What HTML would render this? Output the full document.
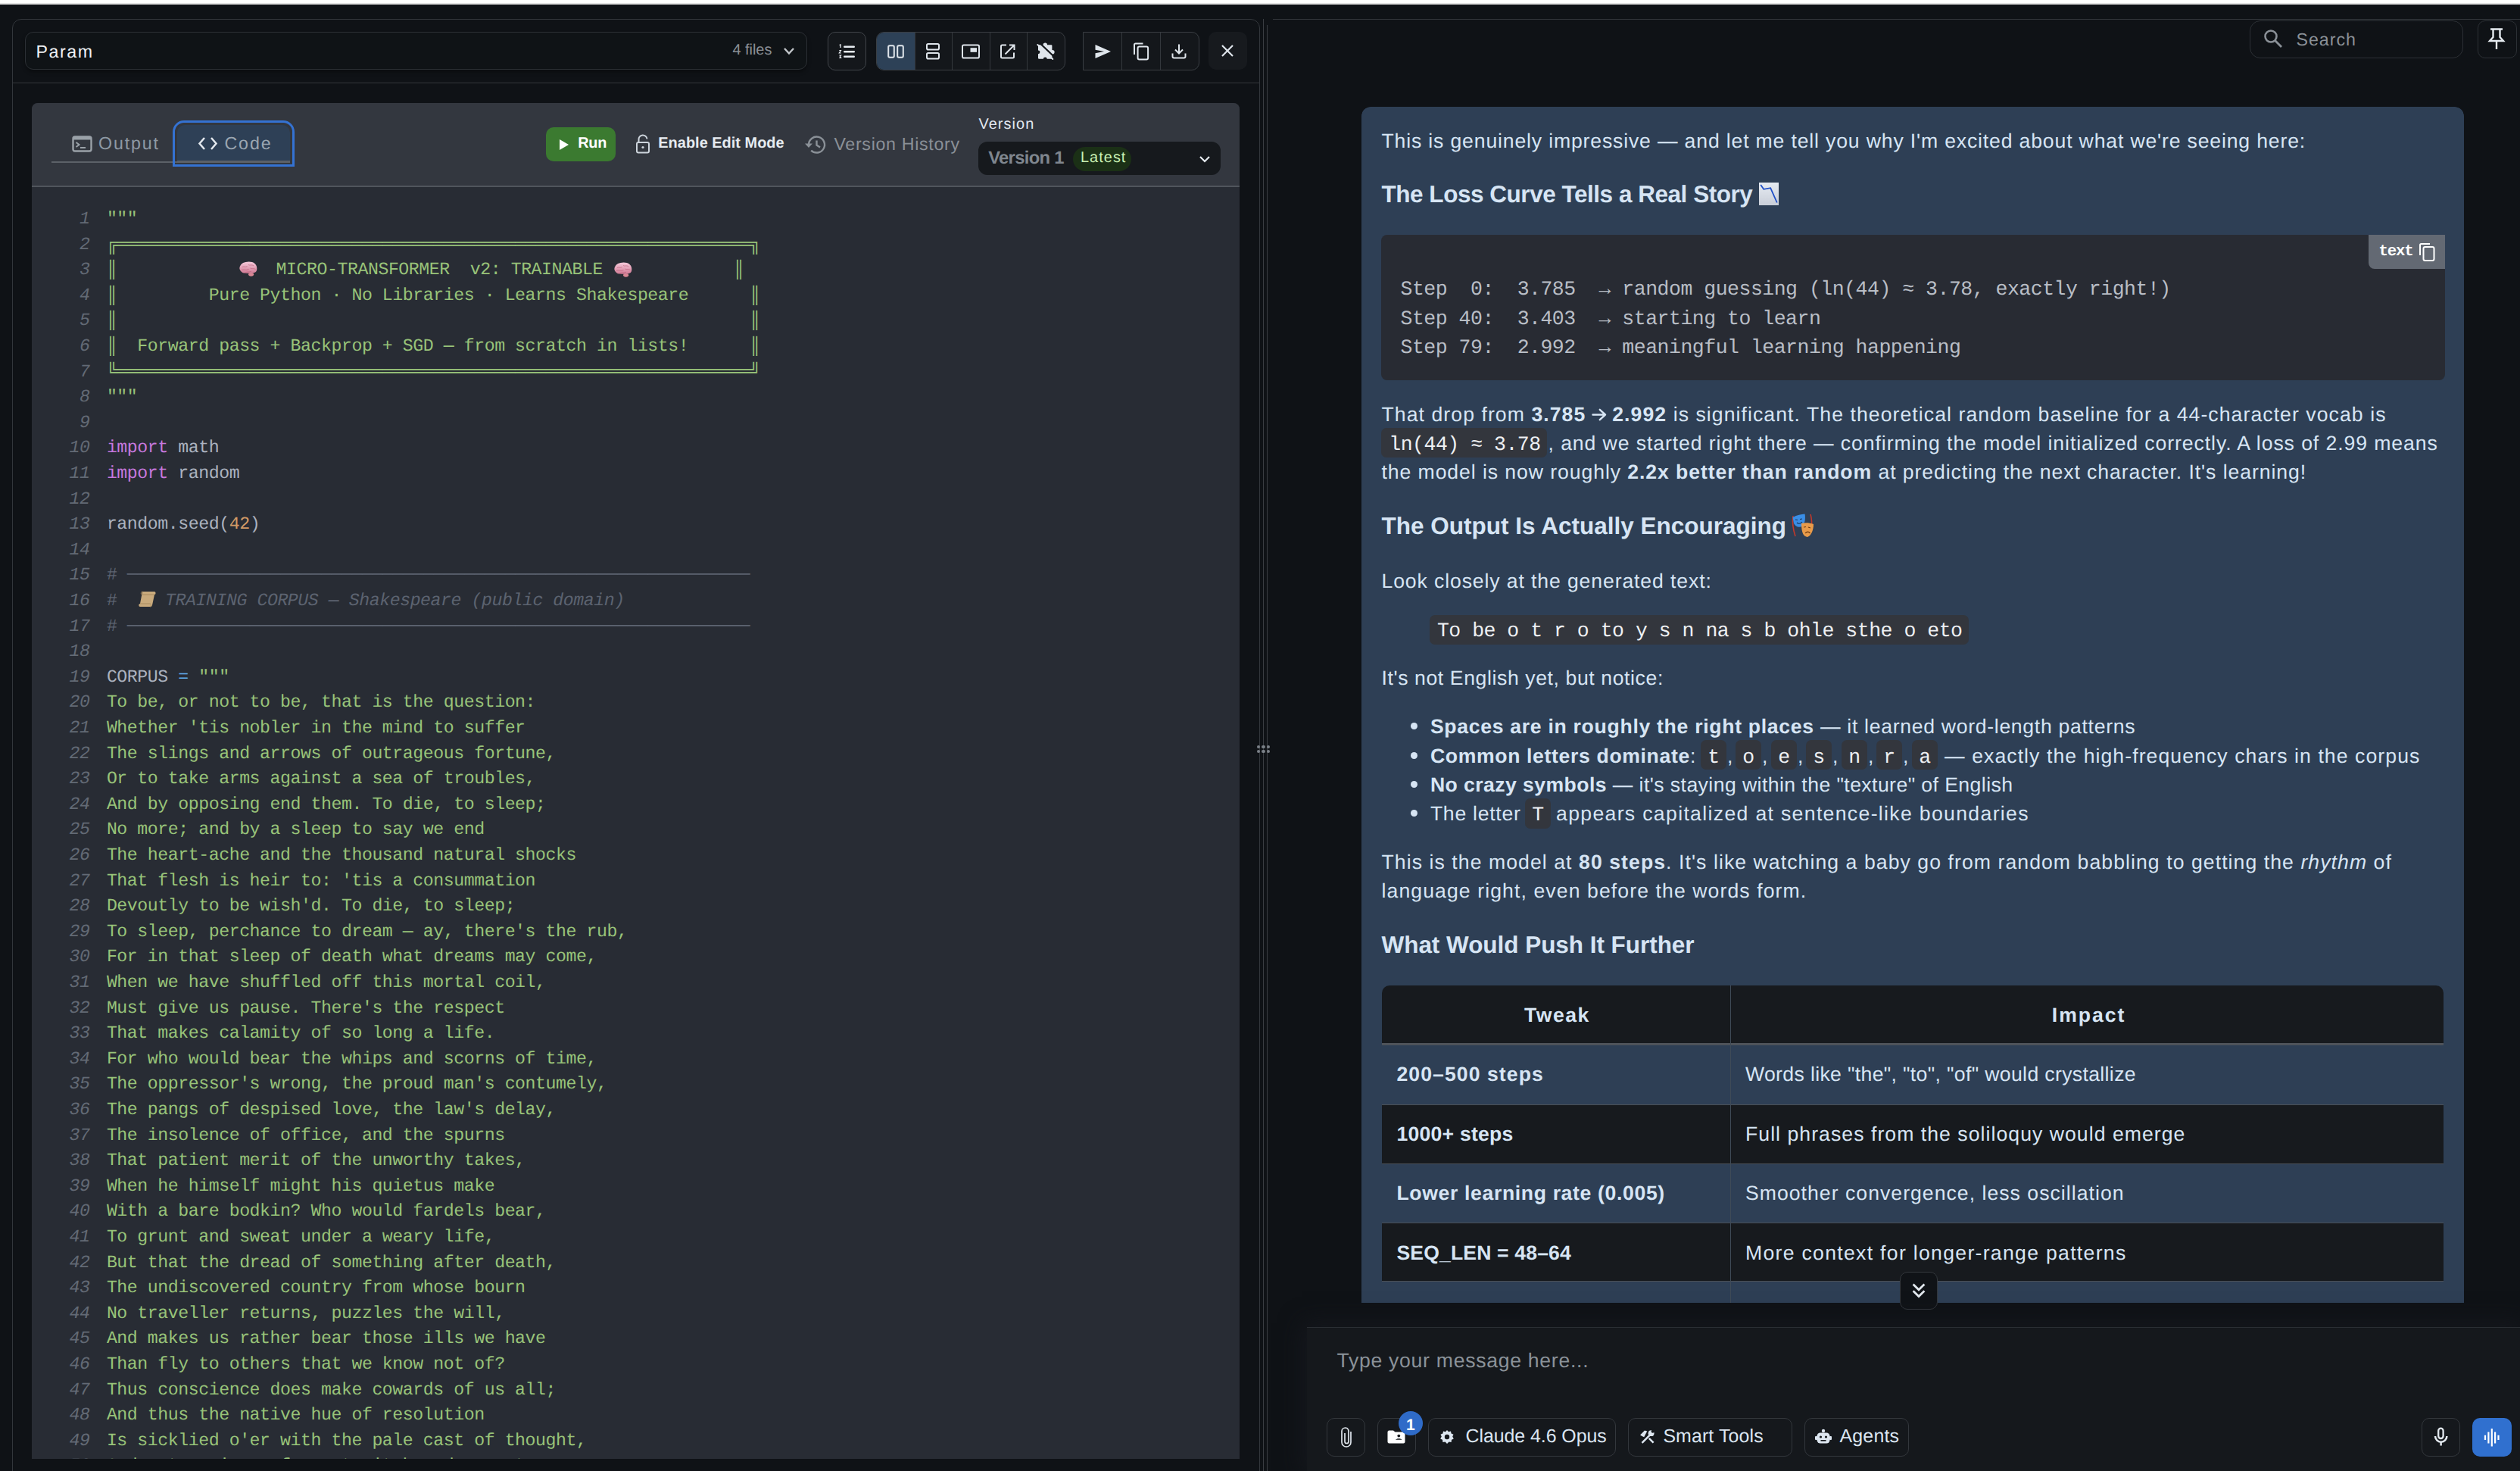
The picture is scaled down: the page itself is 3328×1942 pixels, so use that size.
<!DOCTYPE html>
<html><head><meta charset="utf-8"><title>Param</title>
<style>
html,body{margin:0;padding:0;}
body{text-rendering:geometricPrecision;width:3328px;height:1942px;position:relative;overflow:hidden;background:#0f1216;font-family:"Liberation Sans", sans-serif;}
b{font-weight:700}
.ic{position:absolute;overflow:visible}
</style></head><body>
<div style="position:absolute;left:0px;top:0px;width:3328px;height:4px;background:#ffffff"></div>
<div style="position:absolute;left:0px;top:4px;width:3328px;height:2px;background:#e3e3e3"></div>
<div style="position:absolute;left:16px;top:25px;width:1646px;height:2000px;border:1px solid #32363b;border-radius:12px;"></div>
<div style="position:absolute;left:17px;top:109px;width:1646px;height:1px;background:#32363b"></div>
<div style="position:absolute;left:33px;top:42px;width:1031px;height:48px;border:1px solid #2c3035;border-radius:11px;background:#0f1316;box-shadow:0 3px 5px rgba(0,0,0,0.35);"></div>
<div id="t_param" style="position:absolute;left:47.4px;top:52.00px;white-space:pre;font-family:'Liberation Sans', sans-serif;font-size:23.2px;line-height:32px;color:#eef1f4;font-weight:400;letter-spacing:1.623px;">Param</div>
<div id="t_4files" style="position:absolute;left:967.4px;top:52.10px;white-space:pre;font-family:'Liberation Sans', sans-serif;font-size:19.9px;line-height:28px;color:#8a8f95;font-weight:400;letter-spacing:0.005px;">4 files</div>
<svg class="ic" style="left:1034px;top:62px" width="16" height="11" viewBox="0 0 16 11"><path d="M2 2 L8 8.5 L14 2" fill="none" stroke="#c4c8cc" stroke-width="2.4"/></svg>
<div style="position:absolute;left:1093px;top:42px;width:49px;height:49px;border:1px solid #404449;border-radius:10px;background:#14171b;"></div>
<svg class="ic" style="left:1107px;top:57.7px" width="24" height="22" viewBox="0 0 24 22"><rect x="7" y="2.5" width="15" height="2.4" rx="1.2" fill="#e6ebf0"/><rect x="7" y="9" width="15" height="2.4" rx="1.2" fill="#e6ebf0"/><rect x="7" y="15.5" width="15" height="2.4" rx="1.2" fill="#e6ebf0"/><path d="M1.5 1.5 L3 1 L3 5" stroke="#e6ebf0" stroke-width="1.3" fill="none"/><path d="M1.3 8.5 L3.5 8.5 L1.3 12 L3.7 12" stroke="#e6ebf0" stroke-width="1.2" fill="none"/><path d="M1.3 15 L3.6 15 L2.4 16.6 L3.6 18.4 L1.3 18.4" stroke="#e6ebf0" stroke-width="1.2" fill="none"/></svg>
<div style="position:absolute;left:1157px;top:42px;width:248px;height:49px;border:1px solid #3a3e43;border-radius:10px;background:#14171b;overflow:hidden;"><div style="position:absolute;left:0;top:0;width:50px;height:49px;background:#2d4157"></div><div style="position:absolute;left:50px;top:0;width:1px;height:49px;background:#34383d"></div><div style="position:absolute;left:99px;top:0;width:1px;height:49px;background:#34383d"></div><div style="position:absolute;left:149px;top:0;width:1px;height:49px;background:#34383d"></div><div style="position:absolute;left:198px;top:0;width:1px;height:49px;background:#34383d"></div></div>
<svg class="ic" style="left:1171px;top:58px" width="24" height="20" viewBox="0 0 24 20"><rect x="2.2" y="2.2" width="7.6" height="15.6" rx="1.8" fill="none" stroke="#dfe5eb" stroke-width="2"/><rect x="14.2" y="2.2" width="7.6" height="15.6" rx="1.8" fill="none" stroke="#dfe5eb" stroke-width="2"/></svg>
<svg class="ic" style="left:1222px;top:56px" width="20" height="24" viewBox="0 0 20 24"><rect x="2" y="2" width="16" height="7.6" rx="1.8" fill="none" stroke="#dfe5eb" stroke-width="2"/><rect x="2" y="14" width="16" height="7.6" rx="1.8" fill="none" stroke="#dfe5eb" stroke-width="2"/></svg>
<svg class="ic" style="left:1269px;top:57px" width="26" height="22" viewBox="0 0 26 22"><rect x="2" y="2.5" width="22" height="17" rx="1.8" fill="none" stroke="#dfe5eb" stroke-width="2"/><rect x="12.5" y="6.2" width="8.5" height="5.6" fill="#dfe5eb"/></svg>
<svg class="ic" style="left:1320px;top:57px" width="22" height="22" viewBox="0 0 22 22"><path d="M9 2.5 H3.5 a1.5 1.5 0 0 0 -1.5 1.5 V18 a1.5 1.5 0 0 0 1.5 1.5 H17.5 a1.5 1.5 0 0 0 1.5 -1.5 V12.5" fill="none" stroke="#dfe5eb" stroke-width="2"/><path d="M13 2.5 H19.5 V9 M19.2 2.8 L7.5 14.5" fill="none" stroke="#dfe5eb" stroke-width="2"/></svg>
<svg class="ic" style="left:1355px;top:42px" width="55" height="50" viewBox="0 0 55 50"><rect x="16" y="17.2" width="18.4" height="18.6" rx="1.2" fill="#dfe5eb"/><circle cx="25.3" cy="17.3" r="2.7" fill="#dfe5eb"/><circle cx="34.8" cy="26.7" r="2.8" fill="#dfe5eb"/><circle cx="16" cy="26.8" r="2.4" fill="#14171b"/><circle cx="25.3" cy="35.8" r="2.4" fill="#14171b"/><path d="M16.2 15.6 L36.2 34.6" stroke="#14171b" stroke-width="2.2" transform="translate(1.3,-1.3)"/><path d="M15.3 17 L35.3 36" stroke="#dfe5eb" stroke-width="1.9" stroke-linecap="round"/></svg>
<div style="position:absolute;left:1430px;top:42px;width:152px;height:49px;border:1px solid #3a3e43;border-radius:0 10px 10px 0;background:#14171b;overflow:hidden;"><div style="position:absolute;left:50px;top:0;width:1px;height:49px;background:#34383d"></div><div style="position:absolute;left:101px;top:0;width:1px;height:49px;background:#34383d"></div></div>
<svg class="ic" style="left:1444px;top:57px" width="24" height="22" viewBox="0 0 24 22"><path d="M2.5 2 L23 11 L2.5 20 L2.5 13.2 L14 11 L2.5 8.8 Z" fill="#dfe5eb"/></svg>
<svg class="ic" style="left:1495px;top:55px" width="24" height="26" viewBox="0 0 24 26"><path d="M3 17 V4 a1.5 1.5 0 0 1 1.5 -1.5 H14.5" fill="none" stroke="#dfe5eb" stroke-width="2"/><rect x="7.6" y="6.5" width="13.5" height="17" rx="2" fill="none" stroke="#dfe5eb" stroke-width="2"/></svg>
<svg class="ic" style="left:1546px;top:57px" width="22" height="22" viewBox="0 0 22 22"><path d="M11 1.5 V13 M6 8.5 L11 13.5 L16 8.5" fill="none" stroke="#dfe5eb" stroke-width="2"/><path d="M2.5 13.5 V17.5 a2 2 0 0 0 2 2 H17.5 a2 2 0 0 0 2 -2 V13.5" fill="none" stroke="#dfe5eb" stroke-width="2"/></svg>
<div style="position:absolute;left:1596px;top:42px;width:51px;height:50px;background:#171a1e;border-radius:10px"></div>
<svg class="ic" style="left:1611px;top:57px" width="20" height="20" viewBox="0 0 20 20"><path d="M3 3 L17 17 M17 3 L3 17" stroke="#dfe5eb" stroke-width="2.2"/></svg>
<div style="position:absolute;left:42px;top:136px;width:1595px;height:1790px;border-radius:8px 8px 0 0;overflow:hidden;background:#282c34;"><div style="position:absolute;left:0;top:0;width:1595px;height:109px;background:#33373f"></div><div style="position:absolute;left:0;top:109px;width:1595px;height:1.5px;background:#50555c"></div></div>
<div style="position:absolute;left:68px;top:213px;width:315px;height:2px;background:#5c6168"></div>
<div style="position:absolute;left:228px;top:159px;width:155px;height:55px;border:3px solid #3472d2;border-bottom-width:3px;border-radius:15px 15px 0 0;"></div>
<div style="position:absolute;left:234px;top:165px;width:149px;height:48px;background:#2e4056;border-radius:10px 10px 0 0"></div>
<div style="position:absolute;left:234px;top:212px;width:149px;height:2px;background:#5c6168"></div>
<svg class="ic" style="left:95px;top:179px" width="27" height="22" viewBox="0 0 27 22"><rect x="1.5" y="1.5" width="24" height="19" rx="2.5" fill="none" stroke="#9aa1a8" stroke-width="2.4"/><rect x="1.5" y="1.5" width="24" height="4" fill="#9aa1a8"/><path d="M5.5 9 L9.5 12 L5.5 15" fill="none" stroke="#9aa1a8" stroke-width="2"/><rect x="11" y="15" width="7" height="2" fill="#9aa1a8"/></svg>
<div id="t_output" style="position:absolute;left:130px;top:173.00px;white-space:pre;font-family:'Liberation Sans', sans-serif;font-size:23.2px;line-height:32px;color:#8e99a4;font-weight:400;letter-spacing:1.875px;">Output</div>
<svg class="ic" style="left:261px;top:180px" width="27" height="19" viewBox="0 0 27 19"><path d="M9 2 L2.5 9.5 L9 17 M18 2 L24.5 9.5 L18 17" fill="none" stroke="#e3e8ee" stroke-width="2.5"/></svg>
<div id="t_code" style="position:absolute;left:296.4px;top:173.00px;white-space:pre;font-family:'Liberation Sans', sans-serif;font-size:23.2px;line-height:32px;color:#9ba6b1;font-weight:400;letter-spacing:1.951px;">Code</div>
<div style="position:absolute;left:721px;top:168px;width:92px;height:45px;background:#3b7a30;border-radius:10px"></div>
<svg class="ic" style="left:738px;top:183px" width="14" height="16" viewBox="0 0 14 16"><path d="M1 1 L13 8 L1 15 Z" fill="#ffffff"/></svg>
<div id="t_run" style="position:absolute;left:763.3px;top:175.10px;white-space:pre;font-family:'Liberation Sans', sans-serif;font-size:19.9px;line-height:28px;color:#ffffff;font-weight:700;letter-spacing:-0.335px;">Run</div>
<svg class="ic" style="left:839px;top:177px" width="20" height="26" viewBox="0 0 20 26"><path d="M4.5 11 V7.5 a5.5 5.5 0 0 1 11 -1" fill="none" stroke="#cdd4dc" stroke-width="2"/><rect x="2" y="11" width="16" height="13.5" rx="2" fill="none" stroke="#cdd4dc" stroke-width="2"/><circle cx="10" cy="17.5" r="1.6" fill="#cdd4dc"/></svg>
<div id="t_edit" style="position:absolute;left:869.3px;top:175.10px;white-space:pre;font-family:'Liberation Sans', sans-serif;font-size:19.9px;line-height:28px;color:#e6ebf0;font-weight:700;letter-spacing:0.035px;">Enable Edit Mode</div>
<svg class="ic" style="left:1061px;top:177px" width="32" height="28" viewBox="0 0 32 28"><path d="M7 14 a10.5 10.5 0 1 1 3.2 7.6" fill="none" stroke="#8a9097" stroke-width="2.4"/><path d="M2 12.5 L7 18 L12 12.5 Z" fill="#8a9097"/><path d="M17.5 8.5 V14.5 L22 17.5" fill="none" stroke="#8a9097" stroke-width="2.4"/></svg>
<div id="t_vhist" style="position:absolute;left:1101.5px;top:174.10px;white-space:pre;font-family:'Liberation Sans', sans-serif;font-size:23.2px;line-height:32px;color:#8a9097;font-weight:400;letter-spacing:0.684px;">Version History</div>
<div id="t_version" style="position:absolute;left:1292.4px;top:150.10px;white-space:pre;font-family:'Liberation Sans', sans-serif;font-size:19.9px;line-height:28px;color:#e2e8f0;font-weight:400;letter-spacing:1.092px;">Version</div>
<div style="position:absolute;left:1292px;top:187px;width:320px;height:44px;background:#16191d;border-radius:12px"></div>
<div id="t_v1" style="position:absolute;left:1305.2px;top:192.30px;white-space:pre;font-family:'Liberation Sans', sans-serif;font-size:23.8px;line-height:33px;color:#7f868e;font-weight:700;letter-spacing:-0.679px;">Version 1</div>
<div style="position:absolute;left:1417px;top:194px;width:77px;height:32px;background:#1b3016;border-radius:16px"></div>
<div id="t_latest" style="position:absolute;left:1427px;top:194.40px;white-space:pre;font-family:'Liberation Sans', sans-serif;font-size:19.9px;line-height:28px;color:#c9f0b4;font-weight:400;letter-spacing:1.043px;">Latest</div>
<svg class="ic" style="left:1583px;top:204px" width="16" height="12" viewBox="0 0 16 12"><path d="M2 3 L8 9 L14 3" fill="none" stroke="#e6ebf0" stroke-width="2.2"/></svg>
<div style="position:absolute;left:1668px;top:25px;width:1.2000000000000455px;height:1917px;background:#3a3e43"></div>
<div style="position:absolute;left:1673px;top:33px;width:1.2000000000000455px;height:1909px;background:#3a3e43"></div>
<div style="position:absolute;left:1681px;top:25px;width:1647px;height:1px;background:#32363b"></div>
<div style="position:absolute;left:1659.8px;top:983.5px;width:4.4px;height:4.4px;border-radius:50%;background:#7a8087"></div>
<div style="position:absolute;left:1659.8px;top:989.5999999999999px;width:4.4px;height:4.4px;border-radius:50%;background:#7a8087"></div>
<div style="position:absolute;left:1666.3px;top:983.5px;width:4.4px;height:4.4px;border-radius:50%;background:#7a8087"></div>
<div style="position:absolute;left:1666.3px;top:989.5999999999999px;width:4.4px;height:4.4px;border-radius:50%;background:#7a8087"></div>
<div style="position:absolute;left:1672.8px;top:983.5px;width:4.4px;height:4.4px;border-radius:50%;background:#7a8087"></div>
<div style="position:absolute;left:1672.8px;top:989.5999999999999px;width:4.4px;height:4.4px;border-radius:50%;background:#7a8087"></div>
<div style="position:absolute;left:2971px;top:27px;width:280px;height:48px;border:1px solid #2c3035;border-radius:14px;"></div>
<svg class="ic" style="left:2989px;top:38px" width="27" height="27" viewBox="0 0 27 27"><circle cx="10" cy="10" r="7.5" fill="none" stroke="#8a9097" stroke-width="2.6"/><path d="M15.5 15.5 L24 24" stroke="#8a9097" stroke-width="2.8"/></svg>
<div id="t_search" style="position:absolute;left:3032.5px;top:36.20px;white-space:pre;font-family:'Liberation Sans', sans-serif;font-size:23.2px;line-height:32px;color:#8a9097;font-weight:400;letter-spacing:1.006px;">Search</div>
<div style="position:absolute;left:3272px;top:27px;width:50px;height:48px;border:1px solid #2c3035;border-radius:10px;"></div>
<svg class="ic" style="left:3285px;top:36px" width="24" height="32" viewBox="0 0 24 32"><path d="M4 2.5 H20 M7.5 3 V13 L3 18 H21 L16.5 13 V3" fill="none" stroke="#e6ebf0" stroke-width="2.4"/><path d="M12 18 V29" stroke="#e6ebf0" stroke-width="2.4"/></svg>
<div style="position:absolute;left:42px;top:246px;width:1595px;height:1680px;overflow:hidden;">
<div style="position:absolute;left:-42px;top:-246px;width:3328px;height:1942px;">
<div style="position:absolute;left:0;top:272.90px;width:118.5px;text-align:right;white-space:pre;font-family:'Liberation Mono', monospace;font-size:23.2px;line-height:33.6px;color:#636a75;font-style:italic;letter-spacing:-0.434px">1</div>
<div style="position:absolute;left:0;top:306.50px;width:118.5px;text-align:right;white-space:pre;font-family:'Liberation Mono', monospace;font-size:23.2px;line-height:33.6px;color:#636a75;font-style:italic;letter-spacing:-0.434px">2</div>
<div style="position:absolute;left:0;top:340.10px;width:118.5px;text-align:right;white-space:pre;font-family:'Liberation Mono', monospace;font-size:23.2px;line-height:33.6px;color:#636a75;font-style:italic;letter-spacing:-0.434px">3</div>
<div style="position:absolute;left:0;top:373.70px;width:118.5px;text-align:right;white-space:pre;font-family:'Liberation Mono', monospace;font-size:23.2px;line-height:33.6px;color:#636a75;font-style:italic;letter-spacing:-0.434px">4</div>
<div style="position:absolute;left:0;top:407.30px;width:118.5px;text-align:right;white-space:pre;font-family:'Liberation Mono', monospace;font-size:23.2px;line-height:33.6px;color:#636a75;font-style:italic;letter-spacing:-0.434px">5</div>
<div style="position:absolute;left:0;top:440.90px;width:118.5px;text-align:right;white-space:pre;font-family:'Liberation Mono', monospace;font-size:23.2px;line-height:33.6px;color:#636a75;font-style:italic;letter-spacing:-0.434px">6</div>
<div style="position:absolute;left:0;top:474.50px;width:118.5px;text-align:right;white-space:pre;font-family:'Liberation Mono', monospace;font-size:23.2px;line-height:33.6px;color:#636a75;font-style:italic;letter-spacing:-0.434px">7</div>
<div style="position:absolute;left:0;top:508.10px;width:118.5px;text-align:right;white-space:pre;font-family:'Liberation Mono', monospace;font-size:23.2px;line-height:33.6px;color:#636a75;font-style:italic;letter-spacing:-0.434px">8</div>
<div style="position:absolute;left:0;top:541.70px;width:118.5px;text-align:right;white-space:pre;font-family:'Liberation Mono', monospace;font-size:23.2px;line-height:33.6px;color:#636a75;font-style:italic;letter-spacing:-0.434px">9</div>
<div style="position:absolute;left:0;top:575.30px;width:118.5px;text-align:right;white-space:pre;font-family:'Liberation Mono', monospace;font-size:23.2px;line-height:33.6px;color:#636a75;font-style:italic;letter-spacing:-0.434px">10</div>
<div style="position:absolute;left:0;top:608.90px;width:118.5px;text-align:right;white-space:pre;font-family:'Liberation Mono', monospace;font-size:23.2px;line-height:33.6px;color:#636a75;font-style:italic;letter-spacing:-0.434px">11</div>
<div style="position:absolute;left:0;top:642.50px;width:118.5px;text-align:right;white-space:pre;font-family:'Liberation Mono', monospace;font-size:23.2px;line-height:33.6px;color:#636a75;font-style:italic;letter-spacing:-0.434px">12</div>
<div style="position:absolute;left:0;top:676.10px;width:118.5px;text-align:right;white-space:pre;font-family:'Liberation Mono', monospace;font-size:23.2px;line-height:33.6px;color:#636a75;font-style:italic;letter-spacing:-0.434px">13</div>
<div style="position:absolute;left:0;top:709.70px;width:118.5px;text-align:right;white-space:pre;font-family:'Liberation Mono', monospace;font-size:23.2px;line-height:33.6px;color:#636a75;font-style:italic;letter-spacing:-0.434px">14</div>
<div style="position:absolute;left:0;top:743.30px;width:118.5px;text-align:right;white-space:pre;font-family:'Liberation Mono', monospace;font-size:23.2px;line-height:33.6px;color:#636a75;font-style:italic;letter-spacing:-0.434px">15</div>
<div style="position:absolute;left:0;top:776.90px;width:118.5px;text-align:right;white-space:pre;font-family:'Liberation Mono', monospace;font-size:23.2px;line-height:33.6px;color:#636a75;font-style:italic;letter-spacing:-0.434px">16</div>
<div style="position:absolute;left:0;top:810.50px;width:118.5px;text-align:right;white-space:pre;font-family:'Liberation Mono', monospace;font-size:23.2px;line-height:33.6px;color:#636a75;font-style:italic;letter-spacing:-0.434px">17</div>
<div style="position:absolute;left:0;top:844.10px;width:118.5px;text-align:right;white-space:pre;font-family:'Liberation Mono', monospace;font-size:23.2px;line-height:33.6px;color:#636a75;font-style:italic;letter-spacing:-0.434px">18</div>
<div style="position:absolute;left:0;top:877.70px;width:118.5px;text-align:right;white-space:pre;font-family:'Liberation Mono', monospace;font-size:23.2px;line-height:33.6px;color:#636a75;font-style:italic;letter-spacing:-0.434px">19</div>
<div style="position:absolute;left:0;top:911.30px;width:118.5px;text-align:right;white-space:pre;font-family:'Liberation Mono', monospace;font-size:23.2px;line-height:33.6px;color:#636a75;font-style:italic;letter-spacing:-0.434px">20</div>
<div style="position:absolute;left:0;top:944.90px;width:118.5px;text-align:right;white-space:pre;font-family:'Liberation Mono', monospace;font-size:23.2px;line-height:33.6px;color:#636a75;font-style:italic;letter-spacing:-0.434px">21</div>
<div style="position:absolute;left:0;top:978.50px;width:118.5px;text-align:right;white-space:pre;font-family:'Liberation Mono', monospace;font-size:23.2px;line-height:33.6px;color:#636a75;font-style:italic;letter-spacing:-0.434px">22</div>
<div style="position:absolute;left:0;top:1012.10px;width:118.5px;text-align:right;white-space:pre;font-family:'Liberation Mono', monospace;font-size:23.2px;line-height:33.6px;color:#636a75;font-style:italic;letter-spacing:-0.434px">23</div>
<div style="position:absolute;left:0;top:1045.70px;width:118.5px;text-align:right;white-space:pre;font-family:'Liberation Mono', monospace;font-size:23.2px;line-height:33.6px;color:#636a75;font-style:italic;letter-spacing:-0.434px">24</div>
<div style="position:absolute;left:0;top:1079.30px;width:118.5px;text-align:right;white-space:pre;font-family:'Liberation Mono', monospace;font-size:23.2px;line-height:33.6px;color:#636a75;font-style:italic;letter-spacing:-0.434px">25</div>
<div style="position:absolute;left:0;top:1112.90px;width:118.5px;text-align:right;white-space:pre;font-family:'Liberation Mono', monospace;font-size:23.2px;line-height:33.6px;color:#636a75;font-style:italic;letter-spacing:-0.434px">26</div>
<div style="position:absolute;left:0;top:1146.50px;width:118.5px;text-align:right;white-space:pre;font-family:'Liberation Mono', monospace;font-size:23.2px;line-height:33.6px;color:#636a75;font-style:italic;letter-spacing:-0.434px">27</div>
<div style="position:absolute;left:0;top:1180.10px;width:118.5px;text-align:right;white-space:pre;font-family:'Liberation Mono', monospace;font-size:23.2px;line-height:33.6px;color:#636a75;font-style:italic;letter-spacing:-0.434px">28</div>
<div style="position:absolute;left:0;top:1213.70px;width:118.5px;text-align:right;white-space:pre;font-family:'Liberation Mono', monospace;font-size:23.2px;line-height:33.6px;color:#636a75;font-style:italic;letter-spacing:-0.434px">29</div>
<div style="position:absolute;left:0;top:1247.30px;width:118.5px;text-align:right;white-space:pre;font-family:'Liberation Mono', monospace;font-size:23.2px;line-height:33.6px;color:#636a75;font-style:italic;letter-spacing:-0.434px">30</div>
<div style="position:absolute;left:0;top:1280.90px;width:118.5px;text-align:right;white-space:pre;font-family:'Liberation Mono', monospace;font-size:23.2px;line-height:33.6px;color:#636a75;font-style:italic;letter-spacing:-0.434px">31</div>
<div style="position:absolute;left:0;top:1314.50px;width:118.5px;text-align:right;white-space:pre;font-family:'Liberation Mono', monospace;font-size:23.2px;line-height:33.6px;color:#636a75;font-style:italic;letter-spacing:-0.434px">32</div>
<div style="position:absolute;left:0;top:1348.10px;width:118.5px;text-align:right;white-space:pre;font-family:'Liberation Mono', monospace;font-size:23.2px;line-height:33.6px;color:#636a75;font-style:italic;letter-spacing:-0.434px">33</div>
<div style="position:absolute;left:0;top:1381.70px;width:118.5px;text-align:right;white-space:pre;font-family:'Liberation Mono', monospace;font-size:23.2px;line-height:33.6px;color:#636a75;font-style:italic;letter-spacing:-0.434px">34</div>
<div style="position:absolute;left:0;top:1415.30px;width:118.5px;text-align:right;white-space:pre;font-family:'Liberation Mono', monospace;font-size:23.2px;line-height:33.6px;color:#636a75;font-style:italic;letter-spacing:-0.434px">35</div>
<div style="position:absolute;left:0;top:1448.90px;width:118.5px;text-align:right;white-space:pre;font-family:'Liberation Mono', monospace;font-size:23.2px;line-height:33.6px;color:#636a75;font-style:italic;letter-spacing:-0.434px">36</div>
<div style="position:absolute;left:0;top:1482.50px;width:118.5px;text-align:right;white-space:pre;font-family:'Liberation Mono', monospace;font-size:23.2px;line-height:33.6px;color:#636a75;font-style:italic;letter-spacing:-0.434px">37</div>
<div style="position:absolute;left:0;top:1516.10px;width:118.5px;text-align:right;white-space:pre;font-family:'Liberation Mono', monospace;font-size:23.2px;line-height:33.6px;color:#636a75;font-style:italic;letter-spacing:-0.434px">38</div>
<div style="position:absolute;left:0;top:1549.70px;width:118.5px;text-align:right;white-space:pre;font-family:'Liberation Mono', monospace;font-size:23.2px;line-height:33.6px;color:#636a75;font-style:italic;letter-spacing:-0.434px">39</div>
<div style="position:absolute;left:0;top:1583.30px;width:118.5px;text-align:right;white-space:pre;font-family:'Liberation Mono', monospace;font-size:23.2px;line-height:33.6px;color:#636a75;font-style:italic;letter-spacing:-0.434px">40</div>
<div style="position:absolute;left:0;top:1616.90px;width:118.5px;text-align:right;white-space:pre;font-family:'Liberation Mono', monospace;font-size:23.2px;line-height:33.6px;color:#636a75;font-style:italic;letter-spacing:-0.434px">41</div>
<div style="position:absolute;left:0;top:1650.50px;width:118.5px;text-align:right;white-space:pre;font-family:'Liberation Mono', monospace;font-size:23.2px;line-height:33.6px;color:#636a75;font-style:italic;letter-spacing:-0.434px">42</div>
<div style="position:absolute;left:0;top:1684.10px;width:118.5px;text-align:right;white-space:pre;font-family:'Liberation Mono', monospace;font-size:23.2px;line-height:33.6px;color:#636a75;font-style:italic;letter-spacing:-0.434px">43</div>
<div style="position:absolute;left:0;top:1717.70px;width:118.5px;text-align:right;white-space:pre;font-family:'Liberation Mono', monospace;font-size:23.2px;line-height:33.6px;color:#636a75;font-style:italic;letter-spacing:-0.434px">44</div>
<div style="position:absolute;left:0;top:1751.30px;width:118.5px;text-align:right;white-space:pre;font-family:'Liberation Mono', monospace;font-size:23.2px;line-height:33.6px;color:#636a75;font-style:italic;letter-spacing:-0.434px">45</div>
<div style="position:absolute;left:0;top:1784.90px;width:118.5px;text-align:right;white-space:pre;font-family:'Liberation Mono', monospace;font-size:23.2px;line-height:33.6px;color:#636a75;font-style:italic;letter-spacing:-0.434px">46</div>
<div style="position:absolute;left:0;top:1818.50px;width:118.5px;text-align:right;white-space:pre;font-family:'Liberation Mono', monospace;font-size:23.2px;line-height:33.6px;color:#636a75;font-style:italic;letter-spacing:-0.434px">47</div>
<div style="position:absolute;left:0;top:1852.10px;width:118.5px;text-align:right;white-space:pre;font-family:'Liberation Mono', monospace;font-size:23.2px;line-height:33.6px;color:#636a75;font-style:italic;letter-spacing:-0.434px">48</div>
<div style="position:absolute;left:0;top:1885.70px;width:118.5px;text-align:right;white-space:pre;font-family:'Liberation Mono', monospace;font-size:23.2px;line-height:33.6px;color:#636a75;font-style:italic;letter-spacing:-0.434px">49</div>
<div style="position:absolute;left:0;top:1919.30px;width:118.5px;text-align:right;white-space:pre;font-family:'Liberation Mono', monospace;font-size:23.2px;line-height:33.6px;color:#636a75;font-style:italic;letter-spacing:-0.434px">50</div>
<div style="position:absolute;left:140.9px;top:272.90px;white-space:pre;font-family:'Liberation Mono', monospace;font-size:23.2px;line-height:33.6px;color:#98c379;font-weight:400;letter-spacing:-0.434px;">"""</div>
<div style="position:absolute;left:140.9px;top:306.50px;white-space:pre;font-family:'Liberation Mono', monospace;font-size:23.2px;line-height:33.6px;color:#98c379;font-weight:400;letter-spacing:-0.434px;">╔══════════════════════════════════════════════════════════════╗</div>
<div style="position:absolute;left:140.9px;top:340.10px;white-space:pre;font-family:'Liberation Mono', monospace;font-size:23.2px;line-height:33.6px;color:#98c379;font-weight:400;letter-spacing:-0.434px;">║</div>
<div style="position:absolute;left:968.9404px;top:340.10px;white-space:pre;font-family:'Liberation Mono', monospace;font-size:23.2px;line-height:33.6px;color:#98c379;font-weight:400;letter-spacing:-0.434px;">║</div>
<svg class="ic" style="left:316px;top:345.3px" width="24" height="20" viewBox="0 0 24 20"><defs><linearGradient id="gbr" x1="0" y1="0" x2="0" y2="1"><stop offset="0" stop-color="#f6cadb"/><stop offset="1" stop-color="#d07a94"/></linearGradient></defs><ellipse cx="15.6" cy="17.3" rx="3.5" ry="2.4" fill="#d98794"/><path d="M0.4 10 C0.2 5.5 3.5 1.8 8.5 1 C12 0.2 17.5 0.2 20.5 3 C23 5 23.6 8.5 23.2 11 C22.8 14 20.5 15.6 17 15.4 C14 15.8 11 16.2 8 15.4 C5 16 1.5 14 0.4 10 Z" fill="url(#gbr)"/><path d="M4 7.5 C6 6 8 8.5 10.5 6.5 M12 4.5 C14 6 16.5 3.8 19 5.8 M3 11.5 C5.5 10 9 12.5 12.5 10.5 M14.5 9 C16.5 10.5 19 8.8 21.5 10.5 M8 15 C10 13.5 13 14.5 16 13.2" fill="none" stroke="#b9607a" stroke-width="0.8" opacity="0.8"/></svg>
<svg class="ic" style="left:810.6px;top:345.5px" width="24" height="20" viewBox="0 0 24 20"><defs><linearGradient id="gbr" x1="0" y1="0" x2="0" y2="1"><stop offset="0" stop-color="#f6cadb"/><stop offset="1" stop-color="#d07a94"/></linearGradient></defs><ellipse cx="15.6" cy="17.3" rx="3.5" ry="2.4" fill="#d98794"/><path d="M0.4 10 C0.2 5.5 3.5 1.8 8.5 1 C12 0.2 17.5 0.2 20.5 3 C23 5 23.6 8.5 23.2 11 C22.8 14 20.5 15.6 17 15.4 C14 15.8 11 16.2 8 15.4 C5 16 1.5 14 0.4 10 Z" fill="url(#gbr)"/><path d="M4 7.5 C6 6 8 8.5 10.5 6.5 M12 4.5 C14 6 16.5 3.8 19 5.8 M3 11.5 C5.5 10 9 12.5 12.5 10.5 M14.5 9 C16.5 10.5 19 8.8 21.5 10.5 M8 15 C10 13.5 13 14.5 16 13.2" fill="none" stroke="#b9607a" stroke-width="0.8" opacity="0.8"/></svg>
<div style="position:absolute;left:364.6px;top:340.10px;white-space:pre;font-family:'Liberation Mono', monospace;font-size:23.2px;line-height:33.6px;color:#98c379;font-weight:400;letter-spacing:-0.434px;">MICRO-TRANSFORMER  v2: TRAINABLE</div>
<div style="position:absolute;left:140.9px;top:373.70px;white-space:pre;font-family:'Liberation Mono', monospace;font-size:23.2px;line-height:33.6px;color:#98c379;font-weight:400;letter-spacing:-0.434px;">║         Pure Python · No Libraries · Learns Shakespeare      ║</div>
<div style="position:absolute;left:140.9px;top:407.30px;white-space:pre;font-family:'Liberation Mono', monospace;font-size:23.2px;line-height:33.6px;color:#98c379;font-weight:400;letter-spacing:-0.434px;">║                                                              ║</div>
<div style="position:absolute;left:140.9px;top:440.90px;white-space:pre;font-family:'Liberation Mono', monospace;font-size:23.2px;line-height:33.6px;color:#98c379;font-weight:400;letter-spacing:-0.434px;">║  Forward pass + Backprop + SGD — from scratch in lists!      ║</div>
<div style="position:absolute;left:140.9px;top:474.50px;white-space:pre;font-family:'Liberation Mono', monospace;font-size:23.2px;line-height:33.6px;color:#98c379;font-weight:400;letter-spacing:-0.434px;">╚══════════════════════════════════════════════════════════════╝</div>
<div style="position:absolute;left:140.9px;top:508.10px;white-space:pre;font-family:'Liberation Mono', monospace;font-size:23.2px;line-height:33.6px;color:#98c379;font-weight:400;letter-spacing:-0.434px;">"""</div>
<div style="position:absolute;left:140.9px;top:575.30px;white-space:pre;font-family:'Liberation Mono', monospace;font-size:23.2px;line-height:33.6px;color:#abb2bf;font-weight:400;letter-spacing:-0.434px;"><span style="color:#c678dd">import</span><span style="color:#abb2bf"> math</span></div>
<div style="position:absolute;left:140.9px;top:608.90px;white-space:pre;font-family:'Liberation Mono', monospace;font-size:23.2px;line-height:33.6px;color:#abb2bf;font-weight:400;letter-spacing:-0.434px;"><span style="color:#c678dd">import</span><span style="color:#abb2bf"> random</span></div>
<div style="position:absolute;left:140.9px;top:676.10px;white-space:pre;font-family:'Liberation Mono', monospace;font-size:23.2px;line-height:33.6px;color:#abb2bf;font-weight:400;letter-spacing:-0.434px;"><span style="color:#abb2bf">random.seed(</span><span style="color:#d19a66">42</span><span style="color:#abb2bf">)</span></div>
<div style="position:absolute;left:140.9px;top:743.30px;white-space:pre;font-family:'Liberation Mono', monospace;font-size:23.2px;line-height:33.6px;color:#5c6370;font-weight:400;letter-spacing:-0.434px;"># ─────────────────────────────────────────────────────────────</div>
<div style="position:absolute;left:140.9px;top:776.90px;white-space:pre;font-family:'Liberation Mono', monospace;font-size:23.2px;line-height:33.6px;color:#5c6370;font-weight:400;letter-spacing:-0.434px;">#</div>
<svg class="ic" style="left:182px;top:778.5px" width="25" height="23" viewBox="0 0 25 23"><path d="M6 2 H22 C24 2 24 6 22 6 L19 20 C18.5 22 17 22 16 22 H3 C1 22 0.5 18 3 18 Z" fill="#c9aa7c"/><path d="M6 2 C4 2 3.5 6 6 6 H22" fill="none" stroke="#a88a5e" stroke-width="1.0"/><path d="M3 18 H16 C18 18 18 22 16 22" fill="none" stroke="#a88a5e" stroke-width="1.0"/></svg>
<div style="position:absolute;left:218.1px;top:776.90px;white-space:pre;font-family:'Liberation Mono', monospace;font-size:23.2px;line-height:33.6px;color:#5c6370;font-weight:400;letter-spacing:-0.434px;font-style:italic;">TRAINING CORPUS — Shakespeare (public domain)</div>
<div style="position:absolute;left:140.9px;top:810.50px;white-space:pre;font-family:'Liberation Mono', monospace;font-size:23.2px;line-height:33.6px;color:#5c6370;font-weight:400;letter-spacing:-0.434px;"># ─────────────────────────────────────────────────────────────</div>
<div style="position:absolute;left:140.9px;top:877.70px;white-space:pre;font-family:'Liberation Mono', monospace;font-size:23.2px;line-height:33.6px;color:#abb2bf;font-weight:400;letter-spacing:-0.434px;"><span style="color:#abb2bf">CORPUS </span><span style="color:#61afef">=</span><span style="color:#98c379"> &quot;&quot;&quot;</span></div>
<div style="position:absolute;left:140.9px;top:911.30px;white-space:pre;font-family:'Liberation Mono', monospace;font-size:23.2px;line-height:33.6px;color:#98c379;font-weight:400;letter-spacing:-0.434px;">To be, or not to be, that is the question:</div>
<div style="position:absolute;left:140.9px;top:944.90px;white-space:pre;font-family:'Liberation Mono', monospace;font-size:23.2px;line-height:33.6px;color:#98c379;font-weight:400;letter-spacing:-0.434px;">Whether &#x27;tis nobler in the mind to suffer</div>
<div style="position:absolute;left:140.9px;top:978.50px;white-space:pre;font-family:'Liberation Mono', monospace;font-size:23.2px;line-height:33.6px;color:#98c379;font-weight:400;letter-spacing:-0.434px;">The slings and arrows of outrageous fortune,</div>
<div style="position:absolute;left:140.9px;top:1012.10px;white-space:pre;font-family:'Liberation Mono', monospace;font-size:23.2px;line-height:33.6px;color:#98c379;font-weight:400;letter-spacing:-0.434px;">Or to take arms against a sea of troubles,</div>
<div style="position:absolute;left:140.9px;top:1045.70px;white-space:pre;font-family:'Liberation Mono', monospace;font-size:23.2px;line-height:33.6px;color:#98c379;font-weight:400;letter-spacing:-0.434px;">And by opposing end them. To die, to sleep;</div>
<div style="position:absolute;left:140.9px;top:1079.30px;white-space:pre;font-family:'Liberation Mono', monospace;font-size:23.2px;line-height:33.6px;color:#98c379;font-weight:400;letter-spacing:-0.434px;">No more; and by a sleep to say we end</div>
<div style="position:absolute;left:140.9px;top:1112.90px;white-space:pre;font-family:'Liberation Mono', monospace;font-size:23.2px;line-height:33.6px;color:#98c379;font-weight:400;letter-spacing:-0.434px;">The heart-ache and the thousand natural shocks</div>
<div style="position:absolute;left:140.9px;top:1146.50px;white-space:pre;font-family:'Liberation Mono', monospace;font-size:23.2px;line-height:33.6px;color:#98c379;font-weight:400;letter-spacing:-0.434px;">That flesh is heir to: &#x27;tis a consummation</div>
<div style="position:absolute;left:140.9px;top:1180.10px;white-space:pre;font-family:'Liberation Mono', monospace;font-size:23.2px;line-height:33.6px;color:#98c379;font-weight:400;letter-spacing:-0.434px;">Devoutly to be wish&#x27;d. To die, to sleep;</div>
<div style="position:absolute;left:140.9px;top:1213.70px;white-space:pre;font-family:'Liberation Mono', monospace;font-size:23.2px;line-height:33.6px;color:#98c379;font-weight:400;letter-spacing:-0.434px;">To sleep, perchance to dream — ay, there&#x27;s the rub,</div>
<div style="position:absolute;left:140.9px;top:1247.30px;white-space:pre;font-family:'Liberation Mono', monospace;font-size:23.2px;line-height:33.6px;color:#98c379;font-weight:400;letter-spacing:-0.434px;">For in that sleep of death what dreams may come,</div>
<div style="position:absolute;left:140.9px;top:1280.90px;white-space:pre;font-family:'Liberation Mono', monospace;font-size:23.2px;line-height:33.6px;color:#98c379;font-weight:400;letter-spacing:-0.434px;">When we have shuffled off this mortal coil,</div>
<div style="position:absolute;left:140.9px;top:1314.50px;white-space:pre;font-family:'Liberation Mono', monospace;font-size:23.2px;line-height:33.6px;color:#98c379;font-weight:400;letter-spacing:-0.434px;">Must give us pause. There&#x27;s the respect</div>
<div style="position:absolute;left:140.9px;top:1348.10px;white-space:pre;font-family:'Liberation Mono', monospace;font-size:23.2px;line-height:33.6px;color:#98c379;font-weight:400;letter-spacing:-0.434px;">That makes calamity of so long a life.</div>
<div style="position:absolute;left:140.9px;top:1381.70px;white-space:pre;font-family:'Liberation Mono', monospace;font-size:23.2px;line-height:33.6px;color:#98c379;font-weight:400;letter-spacing:-0.434px;">For who would bear the whips and scorns of time,</div>
<div style="position:absolute;left:140.9px;top:1415.30px;white-space:pre;font-family:'Liberation Mono', monospace;font-size:23.2px;line-height:33.6px;color:#98c379;font-weight:400;letter-spacing:-0.434px;">The oppressor&#x27;s wrong, the proud man&#x27;s contumely,</div>
<div style="position:absolute;left:140.9px;top:1448.90px;white-space:pre;font-family:'Liberation Mono', monospace;font-size:23.2px;line-height:33.6px;color:#98c379;font-weight:400;letter-spacing:-0.434px;">The pangs of despised love, the law&#x27;s delay,</div>
<div style="position:absolute;left:140.9px;top:1482.50px;white-space:pre;font-family:'Liberation Mono', monospace;font-size:23.2px;line-height:33.6px;color:#98c379;font-weight:400;letter-spacing:-0.434px;">The insolence of office, and the spurns</div>
<div style="position:absolute;left:140.9px;top:1516.10px;white-space:pre;font-family:'Liberation Mono', monospace;font-size:23.2px;line-height:33.6px;color:#98c379;font-weight:400;letter-spacing:-0.434px;">That patient merit of the unworthy takes,</div>
<div style="position:absolute;left:140.9px;top:1549.70px;white-space:pre;font-family:'Liberation Mono', monospace;font-size:23.2px;line-height:33.6px;color:#98c379;font-weight:400;letter-spacing:-0.434px;">When he himself might his quietus make</div>
<div style="position:absolute;left:140.9px;top:1583.30px;white-space:pre;font-family:'Liberation Mono', monospace;font-size:23.2px;line-height:33.6px;color:#98c379;font-weight:400;letter-spacing:-0.434px;">With a bare bodkin? Who would fardels bear,</div>
<div style="position:absolute;left:140.9px;top:1616.90px;white-space:pre;font-family:'Liberation Mono', monospace;font-size:23.2px;line-height:33.6px;color:#98c379;font-weight:400;letter-spacing:-0.434px;">To grunt and sweat under a weary life,</div>
<div style="position:absolute;left:140.9px;top:1650.50px;white-space:pre;font-family:'Liberation Mono', monospace;font-size:23.2px;line-height:33.6px;color:#98c379;font-weight:400;letter-spacing:-0.434px;">But that the dread of something after death,</div>
<div style="position:absolute;left:140.9px;top:1684.10px;white-space:pre;font-family:'Liberation Mono', monospace;font-size:23.2px;line-height:33.6px;color:#98c379;font-weight:400;letter-spacing:-0.434px;">The undiscovered country from whose bourn</div>
<div style="position:absolute;left:140.9px;top:1717.70px;white-space:pre;font-family:'Liberation Mono', monospace;font-size:23.2px;line-height:33.6px;color:#98c379;font-weight:400;letter-spacing:-0.434px;">No traveller returns, puzzles the will,</div>
<div style="position:absolute;left:140.9px;top:1751.30px;white-space:pre;font-family:'Liberation Mono', monospace;font-size:23.2px;line-height:33.6px;color:#98c379;font-weight:400;letter-spacing:-0.434px;">And makes us rather bear those ills we have</div>
<div style="position:absolute;left:140.9px;top:1784.90px;white-space:pre;font-family:'Liberation Mono', monospace;font-size:23.2px;line-height:33.6px;color:#98c379;font-weight:400;letter-spacing:-0.434px;">Than fly to others that we know not of?</div>
<div style="position:absolute;left:140.9px;top:1818.50px;white-space:pre;font-family:'Liberation Mono', monospace;font-size:23.2px;line-height:33.6px;color:#98c379;font-weight:400;letter-spacing:-0.434px;">Thus conscience does make cowards of us all;</div>
<div style="position:absolute;left:140.9px;top:1852.10px;white-space:pre;font-family:'Liberation Mono', monospace;font-size:23.2px;line-height:33.6px;color:#98c379;font-weight:400;letter-spacing:-0.434px;">And thus the native hue of resolution</div>
<div style="position:absolute;left:140.9px;top:1885.70px;white-space:pre;font-family:'Liberation Mono', monospace;font-size:23.2px;line-height:33.6px;color:#98c379;font-weight:400;letter-spacing:-0.434px;">Is sicklied o&#x27;er with the pale cast of thought,</div>
<div style="position:absolute;left:140.9px;top:1919.30px;white-space:pre;font-family:'Liberation Mono', monospace;font-size:23.2px;line-height:33.6px;color:#98c379;font-weight:400;letter-spacing:-0.434px;">And enterprises of great pitch and moment</div>
</div></div>
<div style="position:absolute;left:1798px;top:141px;width:1456px;height:1578.5px;overflow:hidden;border-radius:12px 12px 0 0;">
<div style="position:absolute;left:0;top:0;width:1456px;height:1700px;background:#2e3f55;border-radius:12px;"></div>
<div style="position:absolute;left:-1798px;top:-141px;width:3328px;height:1942px;">
<div id="p1" style="position:absolute;left:1824.5px;top:166.70px;white-space:pre;font-family:'Liberation Sans', sans-serif;font-size:26.6px;line-height:38.4px;color:#d7e5f4;font-weight:400;letter-spacing:0.845px;">This is genuinely impressive — and let me tell you why I'm excited about what we're seeing here:</div>
<div id="h1" style="position:absolute;left:1824.5px;top:232.90px;white-space:pre;font-family:'Liberation Sans', sans-serif;font-size:31.5px;line-height:46px;color:#d7e5f4;font-weight:700;letter-spacing:-0.470px;">The Loss Curve Tells a Real Story</div>
<svg class="ic" style="left:2323px;top:241px" width="26" height="30" viewBox="0 0 26 30"><defs><linearGradient id="gch" x1="0" y1="0" x2="0" y2="1"><stop offset="0" stop-color="#e6ebf2"/><stop offset="1" stop-color="#c9ced8"/></linearGradient></defs><rect x="0" y="0" width="26" height="30" fill="url(#gch)"/><path d="M2.2 3 L6.2 8.8 L15.2 7.2 L23.8 26.5" fill="none" stroke="#1f4fc7" stroke-width="1.8"/></svg>
<div style="position:absolute;left:1824px;top:310px;width:1405px;height:191.5px;background:#282b33;border-radius:8px 0 8px 8px;"></div>
<div style="position:absolute;left:3128px;top:310px;width:101px;height:45px;background:#636973;border-radius:0 0 0 8px;"></div>
<div style="position:absolute;left:3141.6px;top:317.60px;white-space:pre;font-family:'Liberation Mono', monospace;font-size:20.7px;line-height:30px;color:#ffffff;font-weight:700;letter-spacing:-1.200px;">text</div>
<svg class="ic" style="left:3194px;top:320px" width="23" height="26" viewBox="0 0 23 26"><path d="M2 17 V3.5 a1.5 1.5 0 0 1 1.5 -1.5 H15" fill="none" stroke="#fff" stroke-width="2"/><rect x="6.5" y="6" width="14" height="18" rx="2.2" fill="none" stroke="#fff" stroke-width="2"/></svg>
<div style="position:absolute;left:1849.5px;top:363.40px;white-space:pre;font-family:'Liberation Mono', monospace;font-size:26.5px;line-height:38.4px;color:#b9bec6;font-weight:400;letter-spacing:-0.490px;">Step  0:  3.785  → random guessing (ln(44) ≈ 3.78, exactly right!)</div>
<div style="position:absolute;left:1849.5px;top:401.80px;white-space:pre;font-family:'Liberation Mono', monospace;font-size:26.5px;line-height:38.4px;color:#b9bec6;font-weight:400;letter-spacing:-0.490px;">Step 40:  3.403  → starting to learn</div>
<div style="position:absolute;left:1849.5px;top:440.20px;white-space:pre;font-family:'Liberation Mono', monospace;font-size:26.5px;line-height:38.4px;color:#b9bec6;font-weight:400;letter-spacing:-0.490px;">Step 79:  2.992  → meaningful learning happening</div>
<div id="p2a" style="position:absolute;left:1824.5px;top:527.70px;white-space:pre;font-family:'Liberation Sans', sans-serif;font-size:26.6px;line-height:38.4px;color:#d7e5f4;font-weight:400;letter-spacing:1.074px;">That drop from <b>3.785 <svg width="20" height="17" viewBox="0 0 20 17" style="display:inline-block;vertical-align:0px;margin:0 -1px"><path d="M1.5 8.5 H18 M10.8 1.8 L18 8.5 L10.8 15.2" fill="none" stroke="#d7e5f4" stroke-width="2.4" stroke-linecap="round" stroke-linejoin="round"/></svg> 2.992</b> is significant. The theoretical random baseline for a 44-character vocab is</div>
<div style="position:absolute;left:1824px;top:565.4px;width:219px;height:39px;background:#33363d;border-radius:7px;"></div>
<div style="position:absolute;left:1834.3px;top:568.00px;white-space:pre;font-family:'Liberation Mono', monospace;font-size:26.5px;line-height:38.4px;color:#eef0f3;font-weight:400;letter-spacing:-0.490px;">ln(44) ≈ 3.78</div>
<div id="p2b" style="position:absolute;left:2044.5px;top:566.00px;white-space:pre;font-family:'Liberation Sans', sans-serif;font-size:26.6px;line-height:38.4px;color:#d7e5f4;font-weight:400;letter-spacing:0.924px;">, and we started right there — confirming the model initialized correctly. A loss of 2.99 means</div>
<div id="p2c" style="position:absolute;left:1824.5px;top:604.40px;white-space:pre;font-family:'Liberation Sans', sans-serif;font-size:26.6px;line-height:38.4px;color:#d7e5f4;font-weight:400;letter-spacing:0.929px;">the model is now roughly <b>2.2x better than random</b> at predicting the next character. It's learning!</div>
<div id="h2" style="position:absolute;left:1824.5px;top:671.20px;white-space:pre;font-family:'Liberation Sans', sans-serif;font-size:31.5px;line-height:46px;color:#d7e5f4;font-weight:700;letter-spacing:0.007px;">The Output Is Actually Encouraging</div>
<svg class="ic" style="left:2365px;top:678px" width="32" height="32" viewBox="0 0 32 32"><path d="M3 3 C2 10 2 18 6 30" fill="none" stroke="#c0392b" stroke-width="1.6"/><path d="M26 1 C28 8 28 14 27 20" fill="none" stroke="#c0392b" stroke-width="1.6"/><path d="M2.5 5 C8 2 14 1 18.5 0.5 C19.5 6 19 13 15 16.5 C11 19.5 6 17 4 13 Z" fill="#3a8ee6"/><path d="M6 8 L9 8.5 M12 7.5 L15 7 M8 12 C10 14 13 13.5 15 11" fill="none" stroke="#17365e" stroke-width="1.1"/><path d="M14 13 C19 11.5 25 12 30 14 C30 22 27 29 22 31 C17 30.5 14 26 14 13 Z" fill="#e89b4a"/><path d="M17 18 L20 17.5 M23 18 L26 19 M19 26 C21 23.5 24 23.5 25.5 26" fill="none" stroke="#6b3a12" stroke-width="1.1"/></svg>
<div id="p3" style="position:absolute;left:1824.5px;top:748.00px;white-space:pre;font-family:'Liberation Sans', sans-serif;font-size:26.6px;line-height:38.4px;color:#d7e5f4;font-weight:400;letter-spacing:0.889px;">Look closely at the generated text:</div>
<div style="position:absolute;left:1888px;top:811.5px;width:711.5px;height:39px;background:#33363d;border-radius:7px;"></div>
<div style="position:absolute;left:1897.9px;top:813.60px;white-space:pre;font-family:'Liberation Mono', monospace;font-size:26.5px;line-height:38.4px;color:#eef0f3;font-weight:400;letter-spacing:-0.490px;">To be o t r o to y s n na s b ohle sthe o eto</div>
<div id="p4" style="position:absolute;left:1824.5px;top:875.80px;white-space:pre;font-family:'Liberation Sans', sans-serif;font-size:26.6px;line-height:38.4px;color:#d7e5f4;font-weight:400;letter-spacing:0.604px;">It's not English yet, but notice:</div>
<div style="position:absolute;left:1862.8px;top:954.1px;width:9px;height:9px;border-radius:50%;background:#d7e5f4"></div>
<div style="position:absolute;left:1862.8px;top:992.5px;width:9px;height:9px;border-radius:50%;background:#d7e5f4"></div>
<div style="position:absolute;left:1862.8px;top:1030.9px;width:9px;height:9px;border-radius:50%;background:#d7e5f4"></div>
<div style="position:absolute;left:1862.8px;top:1069.3px;width:9px;height:9px;border-radius:50%;background:#d7e5f4"></div>
<div id="b1" style="position:absolute;left:1888.9px;top:940.20px;white-space:pre;font-family:'Liberation Sans', sans-serif;font-size:26.6px;line-height:38.4px;color:#d7e5f4;font-weight:400;letter-spacing:0.700px;"><b>Spaces are in roughly the right places</b> — it learned word-length patterns</div>
<div id="b2a" style="position:absolute;left:1888.9px;top:978.60px;white-space:pre;font-family:'Liberation Sans', sans-serif;font-size:26.6px;line-height:38.4px;color:#d7e5f4;font-weight:400;letter-spacing:0.651px;"><b>Common letters dominate</b>:</div>
<div style="position:absolute;left:2246px;top:977.1px;width:34px;height:39.4px;background:#33363d;border-radius:7px;"></div>
<div style="position:absolute;left:2255.3px;top:980.60px;white-space:pre;font-family:'Liberation Mono', monospace;font-size:26.5px;line-height:38.4px;color:#eef0f3;font-weight:400;letter-spacing:-0.490px;">t</div>
<div style="position:absolute;left:2281px;top:978.60px;white-space:pre;font-family:'Liberation Sans', sans-serif;font-size:26.6px;line-height:38.4px;color:#d7e5f4;font-weight:400;letter-spacing:0.000px;">,</div>
<div style="position:absolute;left:2292px;top:977.1px;width:34px;height:39.4px;background:#33363d;border-radius:7px;"></div>
<div style="position:absolute;left:2301.3px;top:980.60px;white-space:pre;font-family:'Liberation Mono', monospace;font-size:26.5px;line-height:38.4px;color:#eef0f3;font-weight:400;letter-spacing:-0.490px;">o</div>
<div style="position:absolute;left:2327px;top:978.60px;white-space:pre;font-family:'Liberation Sans', sans-serif;font-size:26.6px;line-height:38.4px;color:#d7e5f4;font-weight:400;letter-spacing:0.000px;">,</div>
<div style="position:absolute;left:2339px;top:977.1px;width:34px;height:39.4px;background:#33363d;border-radius:7px;"></div>
<div style="position:absolute;left:2348.3px;top:980.60px;white-space:pre;font-family:'Liberation Mono', monospace;font-size:26.5px;line-height:38.4px;color:#eef0f3;font-weight:400;letter-spacing:-0.490px;">e</div>
<div style="position:absolute;left:2374px;top:978.60px;white-space:pre;font-family:'Liberation Sans', sans-serif;font-size:26.6px;line-height:38.4px;color:#d7e5f4;font-weight:400;letter-spacing:0.000px;">,</div>
<div style="position:absolute;left:2385px;top:977.1px;width:34px;height:39.4px;background:#33363d;border-radius:7px;"></div>
<div style="position:absolute;left:2394.3px;top:980.60px;white-space:pre;font-family:'Liberation Mono', monospace;font-size:26.5px;line-height:38.4px;color:#eef0f3;font-weight:400;letter-spacing:-0.490px;">s</div>
<div style="position:absolute;left:2420px;top:978.60px;white-space:pre;font-family:'Liberation Sans', sans-serif;font-size:26.6px;line-height:38.4px;color:#d7e5f4;font-weight:400;letter-spacing:0.000px;">,</div>
<div style="position:absolute;left:2432px;top:977.1px;width:34px;height:39.4px;background:#33363d;border-radius:7px;"></div>
<div style="position:absolute;left:2441.3px;top:980.60px;white-space:pre;font-family:'Liberation Mono', monospace;font-size:26.5px;line-height:38.4px;color:#eef0f3;font-weight:400;letter-spacing:-0.490px;">n</div>
<div style="position:absolute;left:2467px;top:978.60px;white-space:pre;font-family:'Liberation Sans', sans-serif;font-size:26.6px;line-height:38.4px;color:#d7e5f4;font-weight:400;letter-spacing:0.000px;">,</div>
<div style="position:absolute;left:2478px;top:977.1px;width:34px;height:39.4px;background:#33363d;border-radius:7px;"></div>
<div style="position:absolute;left:2487.3px;top:980.60px;white-space:pre;font-family:'Liberation Mono', monospace;font-size:26.5px;line-height:38.4px;color:#eef0f3;font-weight:400;letter-spacing:-0.490px;">r</div>
<div style="position:absolute;left:2513px;top:978.60px;white-space:pre;font-family:'Liberation Sans', sans-serif;font-size:26.6px;line-height:38.4px;color:#d7e5f4;font-weight:400;letter-spacing:0.000px;">,</div>
<div style="position:absolute;left:2525px;top:977.1px;width:34px;height:39.4px;background:#33363d;border-radius:7px;"></div>
<div style="position:absolute;left:2534.3px;top:980.60px;white-space:pre;font-family:'Liberation Mono', monospace;font-size:26.5px;line-height:38.4px;color:#eef0f3;font-weight:400;letter-spacing:-0.490px;">a</div>
<div id="b2b" style="position:absolute;left:2568px;top:978.60px;white-space:pre;font-family:'Liberation Sans', sans-serif;font-size:26.6px;line-height:38.4px;color:#d7e5f4;font-weight:400;letter-spacing:1.081px;">— exactly the high-frequency chars in the corpus</div>
<div id="b3" style="position:absolute;left:1888.9px;top:1017.00px;white-space:pre;font-family:'Liberation Sans', sans-serif;font-size:26.6px;line-height:38.4px;color:#d7e5f4;font-weight:400;letter-spacing:0.432px;"><b>No crazy symbols</b> — it's staying within the "texture" of English</div>
<div id="b4a" style="position:absolute;left:1888.9px;top:1055.40px;white-space:pre;font-family:'Liberation Sans', sans-serif;font-size:26.6px;line-height:38.4px;color:#d7e5f4;font-weight:400;letter-spacing:0.739px;">The letter</div>
<div style="position:absolute;left:2014px;top:1054.3px;width:34px;height:39.5px;background:#33363d;border-radius:7px;"></div>
<div style="position:absolute;left:2023.3px;top:1057.40px;white-space:pre;font-family:'Liberation Mono', monospace;font-size:26.5px;line-height:38.4px;color:#eef0f3;font-weight:400;letter-spacing:-0.490px;">T</div>
<div id="b4b" style="position:absolute;left:2055.0px;top:1055.40px;white-space:pre;font-family:'Liberation Sans', sans-serif;font-size:26.6px;line-height:38.4px;color:#d7e5f4;font-weight:400;letter-spacing:1.342px;">appears capitalized at sentence-like boundaries</div>
<div id="p5a" style="position:absolute;left:1824.5px;top:1118.60px;white-space:pre;font-family:'Liberation Sans', sans-serif;font-size:26.6px;line-height:38.4px;color:#d7e5f4;font-weight:400;letter-spacing:1.074px;">This is the model at <b>80 steps</b>. It's like watching a baby go from random babbling to getting the <i>rhythm</i> of</div>
<div id="p5b" style="position:absolute;left:1824.5px;top:1156.60px;white-space:pre;font-family:'Liberation Sans', sans-serif;font-size:26.6px;line-height:38.4px;color:#d7e5f4;font-weight:400;letter-spacing:1.101px;">language right, even before the words form.</div>
<div id="h3" style="position:absolute;left:1824.5px;top:1223.90px;white-space:pre;font-family:'Liberation Sans', sans-serif;font-size:31.5px;line-height:46px;color:#d7e5f4;font-weight:700;letter-spacing:-0.042px;">What Would Push It Further</div>
<div style="position:absolute;left:1825px;top:1301px;width:1402.4px;height:77px;background:#171a1e;border-radius:10px 10px 0 0;"></div>
<div style="position:absolute;left:1825px;top:1377.3px;width:1402.4px;height:2.7000000000000455px;background:#4e535a"></div>
<div style="position:absolute;left:1825px;top:1458px;width:1402.4px;height:1px;background:#4a5058"></div>
<div style="position:absolute;left:1825px;top:1459px;width:1402.4px;height:77px;background:#171a1e"></div>
<div style="position:absolute;left:1825px;top:1536px;width:1402.4px;height:1px;background:#4a5058"></div>
<div style="position:absolute;left:1825px;top:1614px;width:1402.4px;height:1px;background:#4a5058"></div>
<div style="position:absolute;left:1825px;top:1615px;width:1402.4px;height:76px;background:#171a1e"></div>
<div style="position:absolute;left:1825px;top:1691px;width:1402.4px;height:1px;background:#4a5058"></div>
<div style="position:absolute;left:2284.7px;top:1301px;width:1.0px;height:419px;background:#3f4a57"></div>
<div id="th1" style="position:absolute;left:2012.9px;top:1320.60px;white-space:pre;font-family:'Liberation Sans', sans-serif;font-size:26.6px;line-height:38.4px;color:#d7e5f4;font-weight:700;letter-spacing:1.515px;">Tweak</div>
<div id="th2" style="position:absolute;left:2709.8px;top:1320.60px;white-space:pre;font-family:'Liberation Sans', sans-serif;font-size:26.6px;line-height:38.4px;color:#d7e5f4;font-weight:700;letter-spacing:1.955px;">Impact</div>
<div id="tr0a" style="position:absolute;left:1844.4px;top:1399.40px;white-space:pre;font-family:'Liberation Sans', sans-serif;font-size:26.6px;line-height:38.4px;color:#d7e5f4;font-weight:700;letter-spacing:1.083px;">200–500 steps</div>
<div id="tr0b" style="position:absolute;left:2305px;top:1399.40px;white-space:pre;font-family:'Liberation Sans', sans-serif;font-size:26.6px;line-height:38.4px;color:#d7e5f4;font-weight:400;letter-spacing:0.356px;">Words like &quot;the&quot;, &quot;to&quot;, &quot;of&quot; would crystallize</div>
<div id="tr1a" style="position:absolute;left:1844.4px;top:1477.80px;white-space:pre;font-family:'Liberation Sans', sans-serif;font-size:26.6px;line-height:38.4px;color:#d7e5f4;font-weight:700;letter-spacing:0.235px;">1000+ steps</div>
<div id="tr1b" style="position:absolute;left:2305px;top:1477.80px;white-space:pre;font-family:'Liberation Sans', sans-serif;font-size:26.6px;line-height:38.4px;color:#d7e5f4;font-weight:400;letter-spacing:1.054px;">Full phrases from the soliloquy would emerge</div>
<div id="tr2a" style="position:absolute;left:1844.4px;top:1556.20px;white-space:pre;font-family:'Liberation Sans', sans-serif;font-size:26.6px;line-height:38.4px;color:#d7e5f4;font-weight:700;letter-spacing:0.647px;">Lower learning rate (0.005)</div>
<div id="tr2b" style="position:absolute;left:2305px;top:1556.20px;white-space:pre;font-family:'Liberation Sans', sans-serif;font-size:26.6px;line-height:38.4px;color:#d7e5f4;font-weight:400;letter-spacing:1.035px;">Smoother convergence, less oscillation</div>
<div id="tr3a" style="position:absolute;left:1844.4px;top:1634.60px;white-space:pre;font-family:'Liberation Sans', sans-serif;font-size:26.6px;line-height:38.4px;color:#d7e5f4;font-weight:700;letter-spacing:0.143px;">SEQ_LEN = 48–64</div>
<div id="tr3b" style="position:absolute;left:2305px;top:1634.60px;white-space:pre;font-family:'Liberation Sans', sans-serif;font-size:26.6px;line-height:38.4px;color:#d7e5f4;font-weight:400;letter-spacing:1.308px;">More context for longer-range patterns</div>
<div id="tr4a" style="position:absolute;left:1844.4px;top:1713.00px;white-space:pre;font-family:'Liberation Sans', sans-serif;font-size:26.6px;line-height:38.4px;color:#d7e5f4;font-weight:700;letter-spacing:0.000px;">Multi-head attention</div>
<div id="tr4b" style="position:absolute;left:2305px;top:1713.00px;white-space:pre;font-family:'Liberation Sans', sans-serif;font-size:26.6px;line-height:38.4px;color:#d7e5f4;font-weight:400;letter-spacing:0.000px;">Richer representations (2–4 heads) for the model</div>
</div></div>
<div style="position:absolute;left:2509px;top:1679px;width:48px;height:48px;background:#101317;border:1px solid #33373c;border-radius:10px;"></div>
<svg class="ic" style="left:2523px;top:1693px" width="22" height="22" viewBox="0 0 22 22"><path d="M3.6 2.5 L11 9.8 L18.4 2.5 M3.6 11.2 L11 18.5 L18.4 11.2" fill="none" stroke="#e3e9ef" stroke-width="2.8"/></svg>
<div style="position:absolute;left:1726px;top:1752px;width:1602px;height:190px;background:#15181c;box-shadow:0 0 28px 6px rgba(22,25,30,0.85);"></div>
<div style="position:absolute;left:1726px;top:1752px;width:1602px;height:1px;background:#2a2e33"></div>
<div id="t_type" style="position:absolute;left:1765.4px;top:1777.00px;white-space:pre;font-family:'Liberation Sans', sans-serif;font-size:26.6px;line-height:38.4px;color:#8b9299;font-weight:400;letter-spacing:0.722px;">Type your message here...</div>
<div style="position:absolute;left:1752.1px;top:1872.2px;width:48.6px;height:49.0px;border:1px solid #33373c;border-radius:10px;"></div>
<svg class="ic" style="left:1766px;top:1880px" width="24" height="34" viewBox="0 0 24 34"><path d="M18 10 V24 A6 6 0 0 1 6 24 V9.5 A4.5 4.5 0 0 1 15 9.5 V23 A2.5 2.5 0 0 1 10 23 V12" fill="none" stroke="#dfe5eb" stroke-width="1.7"/></svg>
<div style="position:absolute;left:1819px;top:1872.2px;width:48.8px;height:49.0px;border:1px solid #33373c;border-radius:10px;"></div>
<svg class="ic" style="left:1832px;top:1888px" width="24" height="18" viewBox="0 0 24 18"><path d="M0.5 2.5 a2 2 0 0 1 2 -2 H8 L10.5 2.5 H21.5 a2 2 0 0 1 2 2 V15.5 a2 2 0 0 1 -2 2 H2.5 a2 2 0 0 1 -2 -2 Z" fill="#ffffff"/><circle cx="15.3" cy="7.6" r="1.9" fill="#15181c"/><path d="M11 12.8 C12 10.6 18.6 10.6 19.6 12.8 Z" fill="#15181c"/></svg>
<div style="position:absolute;left:1847px;top:1863px;width:32px;height:32px;border-radius:50%;background:#2f6bc8;"></div>
<div style="position:absolute;left:1857px;top:1867.00px;white-space:pre;font-family:'Liberation Sans', sans-serif;font-size:21px;line-height:30px;color:#ffffff;font-weight:700;letter-spacing:0.000px;">1</div>
<div style="position:absolute;left:1886px;top:1872.2px;width:245.5px;height:49.0px;border:1px solid #33373c;border-radius:10px;"></div>
<svg class="ic" style="left:1901px;top:1887px" width="20" height="20" viewBox="0 0 20 20"><path d="M10 1 L12 3.2 L15 2.5 L15.6 5.5 L18.5 6.8 L17.2 9.6 L18.8 12.4 L16 13.8 L15.6 16.9 L12.5 16.6 L10 19 L7.6 16.6 L4.4 16.9 L4 13.8 L1.2 12.4 L2.8 9.6 L1.5 6.8 L4.4 5.5 L5 2.5 L8 3.2 Z" fill="#dde6f0"/><circle cx="10" cy="10" r="3.2" fill="#15181c"/></svg>
<div id="t_claude" style="position:absolute;left:1935.5px;top:1879.00px;white-space:pre;font-family:'Liberation Sans', sans-serif;font-size:24.9px;line-height:34px;color:#dce6f2;font-weight:400;letter-spacing:-0.044px;">Claude 4.6 Opus</div>
<div style="position:absolute;left:2150.3px;top:1872.2px;width:214.3px;height:49.0px;border:1px solid #33373c;border-radius:10px;"></div>
<svg class="ic" style="left:2155px;top:1877px" width="40" height="40" viewBox="0 0 40 40"><path d="M13.5 27.8 L23.5 17.8" stroke="#dde6f0" stroke-width="2.5"/><circle cx="25.6" cy="15.2" r="3.9" fill="#dde6f0"/><circle cx="27.6" cy="12.8" r="2" fill="#15181c"/><path d="M27.6 12.8 L31 9.5" stroke="#15181c" stroke-width="3"/><path d="M11 17.5 L17 11.5 L20.3 12.5 L18.8 15.3 L16.2 20.2 L13.5 19 Z" fill="#dde6f0"/><path d="M22.8 21.8 L28.6 27.6" stroke="#dde6f0" stroke-width="2.5"/></svg>
<div id="t_smart" style="position:absolute;left:2196.4px;top:1879.00px;white-space:pre;font-family:'Liberation Sans', sans-serif;font-size:24.9px;line-height:34px;color:#dce6f2;font-weight:400;letter-spacing:0.124px;">Smart Tools</div>
<div style="position:absolute;left:2383.4px;top:1872.2px;width:135.3px;height:49.0px;border:1px solid #33373c;border-radius:10px;"></div>
<svg class="ic" style="left:2397px;top:1886px" width="22" height="21" viewBox="0 0 22 21"><circle cx="11" cy="3" r="2.2" fill="#dde6f0"/><rect x="2.5" y="5.5" width="17" height="14" rx="4.5" fill="#dde6f0"/><rect x="0" y="10" width="3" height="5" rx="1" fill="#dde6f0"/><rect x="19" y="10" width="3" height="5" rx="1" fill="#dde6f0"/><circle cx="7.5" cy="11" r="1.6" fill="#15181c"/><circle cx="14.5" cy="11" r="1.6" fill="#15181c"/><rect x="7.5" y="15" width="7" height="1.6" fill="#15181c"/></svg>
<div id="t_agents" style="position:absolute;left:2429.5px;top:1879.00px;white-space:pre;font-family:'Liberation Sans', sans-serif;font-size:24.9px;line-height:34px;color:#dce6f2;font-weight:400;letter-spacing:0.201px;">Agents</div>
<div style="position:absolute;left:3198.3px;top:1872.2px;width:48.3px;height:49.0px;border:1px solid #33373c;border-radius:10px;"></div>
<svg class="ic" style="left:3208px;top:1880px" width="32" height="34" viewBox="0 0 32 34"><rect x="12.2" y="5.6" width="6.4" height="13.4" rx="3.2" fill="none" stroke="#e3e9ef" stroke-width="2.3"/><path d="M8 16 a7.7 7.7 0 0 0 15.4 0" fill="none" stroke="#e3e9ef" stroke-width="2.5"/><path d="M15.6 23.5 V28.5" stroke="#e3e9ef" stroke-width="2.5"/></svg>
<div style="position:absolute;left:3265px;top:1872px;width:51.59999999999991px;height:51px;background:#3070cf;border-radius:10px"></div>
<svg class="ic" style="left:3276px;top:1880px" width="30" height="34" viewBox="0 0 30 34"><path d="M6 15.9 V20 M10.4 11.5 V24.4 M14.8 7.1 V28.5 M19.1 11.5 V24.4 M23.5 15.9 V20" fill="none" stroke="#ffffff" stroke-width="2.2" stroke-linecap="square"/></svg></body></html>
